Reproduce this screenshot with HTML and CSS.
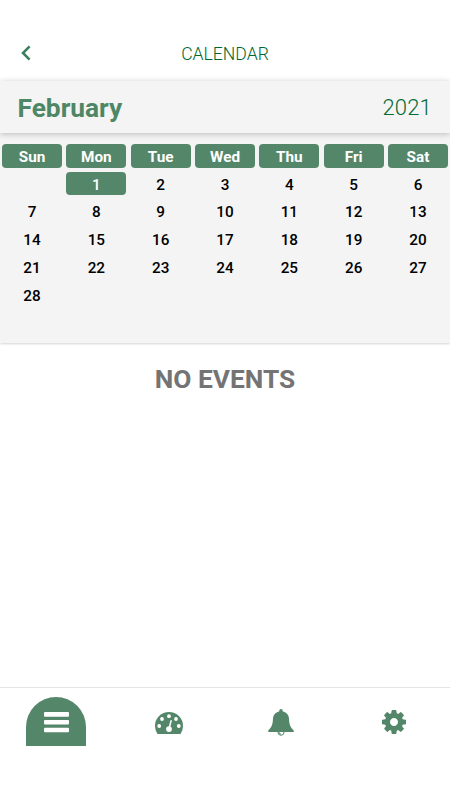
FILE: index.html
```html
<!DOCTYPE html>
<html lang="en">
<head>
<meta charset="utf-8">
<title>Calendar</title>
<link rel="stylesheet" href="styles.css">
</head>
<body>
<header class="topbar">
  <svg class="back" viewBox="0 0 10 16"><path d="M8.6 1.3 2 8l6.6 6.7"/></svg>
  <h1>CALENDAR</h1>
</header>
<section class="month"><h2>February</h2><span class="year">2021</span></section>
<main class="calendar">
  <div class="grid">
    <b class="pill">Sun</b><b class="pill">Mon</b><b class="pill">Tue</b><b class="pill">Wed</b><b class="pill">Thu</b><b class="pill">Fri</b><b class="pill">Sat</b>
    <span></span><span class="pill">1</span><span>2</span><span>3</span><span>4</span><span>5</span><span>6</span>
    <span>7</span><span>8</span><span>9</span><span>10</span><span>11</span><span>12</span><span>13</span>
    <span>14</span><span>15</span><span>16</span><span>17</span><span>18</span><span>19</span><span>20</span>
    <span>21</span><span>22</span><span>23</span><span>24</span><span>25</span><span>26</span><span>27</span>
    <span>28</span>
  </div>
</main>
<section class="events"><p>NO EVENTS</p></section>
<nav class="tabs">
  <a class="tab"><span class="active"><svg class="menu" viewBox="0 0 25 21"><rect width="25" height="4.7" rx="1"/><rect y="8" width="25" height="4.6" rx="1"/><rect y="15.7" width="25" height="4.6" rx="1"/></svg></span></a>
  <a class="tab"><svg class="gauge" viewBox="0 0 28 22"><path d="M14 0A14 14 0 0 0 0 14q0 4 2.2 7.4.4.6 1.2.6h21.2q.8 0 1.2-.6Q28 18 28 14A14 14 0 0 0 14 0z"/><g class="hole"><circle cx="4.2" cy="14" r="1.9"/><circle cx="7" cy="7" r="1.9"/><circle cx="14" cy="4.2" r="1.9"/><circle cx="21" cy="7" r="1.9"/><circle cx="23.8" cy="14" r="1.9"/><circle cx="14" cy="17.1" r="2.9"/></g><path class="needle" d="M14.1 16.5 16.1 8.8"/></svg></a>
  <a class="tab"><svg class="bell" viewBox="0 0 26 27"><path class="clapper" d="M9.9 23a3.1 3.3 0 0 0 6.2 0M13 25.1a2 2 0 0 1-2-2"/><path d="M13 0c-1 0-1.7.8-1.7 1.7v.8C7.5 3.2 5.2 6 5 9.6c-.2 6-1.4 9.2-5 12.1 0 .9.7 1.3 1.500 1.300h23c.8 0 1.500-.4 1.500-1.300-3.600-2.900-4.800-6.100-5-12.100-.2-3.600-2.500-6.400-6.300-7.100v-.8C14.700.8 14 0 13 0z"/></svg></a>
  <a class="tab"><svg class="gear" viewBox="0 0 1536 1536"><path d="M1024 768q0-106-75-181t-181-75-181 75-75 181 75 181 181 75 181-75 75-181zm512-109v222q0 12-8 23t-20 13l-185 28q-19 54-39 91 35 50 107 138 10 12 10 25t-9 23q-27 37-99 108t-94 71q-12 0-26-9l-138-108q-44 23-91 38-16 136-29 186-7 28-36 28h-222q-14 0-24.500-8.500t-11.500-21.500l-28-184q-49-16-90-37l-141 107q-10 9-25 9-14 0-25-11-126-114-165-168-7-10-7-23 0-12 8-23 15-21 51-66.500t54-70.500q-27-50-41-99l-183-27q-13-2-21-12.500t-8-23.500v-222q0-12 8-23t19-13l186-28q14-46 39-92-40-57-107-138-10-12-10-24 0-10 9-23 26-36 98.500-107.500t94.500-71.500q13 0 26 10l138 107q44-23 91-38 16-136 29-186 7-28 36-28h222q14 0 24.500 8.500t11.500 21.500l28 184q49 16 90 37l142-107q9-9 24-9 13 0 25 10 129 119 165 170 7 8 7 22 0 12-8 23-15 21-51 66.500t-54 70.500q26 50 41 98l183 28q13 2 21 12.500t8 23.500z"/></svg></a>
</nav>
</body>
</html>
```

FILE: styles.css
```css
* { box-sizing: border-box; }

body {
  margin: 0;
  height: 800px;
  display: flex;
  flex-direction: column;
  background: #fff;
  color: #000;
  font-family: Roboto, sans-serif;
  overflow: hidden;
}

h1, h2, p { margin: 0; }

.topbar {
  height: 81px;
  padding: 27px 21px 0;
  display: grid;
  grid-template-columns: 10px 1fr 10px;
  align-items: center;
}
.back { width: 10px; height: 16px; margin-top: -2px; }
.back path { fill: none; stroke: #38805a; stroke-width: 2.5; }
.topbar h1 {
  font-size: 17.6px;
  font-weight: 300;
  text-align: center;
  color: #00682f;
}

.month {
  height: 52px;
  padding: 1px 18px 0 17.5px;
  display: flex;
  align-items: center;
  justify-content: space-between;
  position: relative;
  background: #f4f4f4;
  box-shadow: 0 1px 6px rgba(0, 0, 0, .24);
}
.month h2 { font-size: 26.3px; font-weight: 700; color: #4d8766; }
.year { font-size: 22px; font-weight: 300; letter-spacing: .2px; color: #006a33; }

.calendar {
  height: 210px;
  padding: 11.3px 2px 0;
  background: #f4f4f4;
  box-shadow: 0 0 3px rgba(0, 0, 0, .3);
}
.grid {
  display: grid;
  grid-template-columns: repeat(7, 1fr);
  grid-auto-rows: 23.4px;
  gap: 4.35px 4.3px;
}
.grid > * {
  display: flex;
  align-items: center;
  justify-content: center;
  padding-top: 2px;
  font-size: 15.3px;
  font-weight: 500;
}
.grid b { font-weight: 700; }
.grid .pill { background: #54876a; color: #fff; border-radius: 4px; }

.events {
  flex: 1;
  padding-top: 20px;
  text-align: center;
  font-size: 26.3px;
  font-weight: 700;
  line-height: 32px;
  color: #747474;
}

.tabs {
  height: 113px;
  display: grid;
  grid-template-columns: repeat(4, 1fr);
  border-top: 1px solid #e5e5e5;
  fill: #54876a;
}
.tab { height: 67px; display: flex; align-items: center; justify-content: center; }
.active {
  width: 60px;
  height: 49px;
  display: flex;
  align-items: center;
  justify-content: center;
  border-radius: 30px 30px 0 0;
  background: #54876a;
}
.menu { width: 25px; height: 21px; margin-top: 1px; fill: #fff; }
.gauge { width: 28px; height: 22px; margin-top: 3px; }
.hole { fill: #fff; }
.needle { fill: none; stroke: #fff; stroke-width: 1.5px; stroke-linecap: round; }
.bell { width: 26px; height: 27px; margin-top: 2px; }
.clapper { fill: #fff; stroke: #54876a; stroke-width: 1; }
.gear { width: 24px; height: 24px; margin-top: 1px; }
```
